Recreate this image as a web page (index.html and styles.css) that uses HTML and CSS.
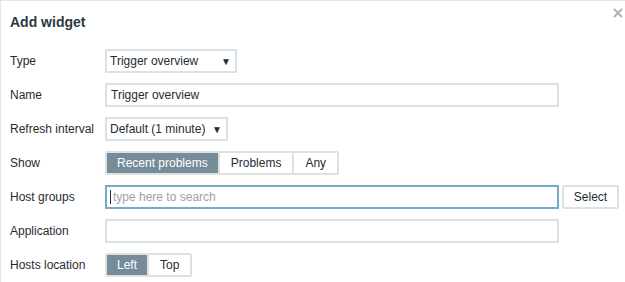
FILE: index.html
```html
<!DOCTYPE html>
<html lang="en">
<head>
  <meta charset="UTF-8" />
  <title>Add widget</title>
  <link rel="stylesheet" href="styles.css">
</head>
<body>
  <div class="dialog">
    <div class="dialog-head">
      <h4>Add widget</h4>
      <button class="btn-close" title="Close">
        <svg width="10" height="10" viewBox="0 0 10 10"><path d="M1 1 L9 9 M9 1 L1 9" stroke="#a9b3b9" stroke-width="2"/></svg>
      </button>
    </div>

    <form class="form-grid">
      <label>Type</label>
      <div class="field">
        <div class="select w-type"><span>Trigger overview</span><i class="arrow">&#9660;</i></div>
      </div>

      <label>Name</label>
      <div class="field">
        <input class="text w-wide" type="text" value="Trigger overview">
      </div>

      <label>Refresh interval</label>
      <div class="field">
        <div class="select w-refresh"><span>Default (1 minute)</span><i class="arrow">&#9660;</i></div>
      </div>

      <label>Show</label>
      <div class="field">
        <div class="radio-list">
          <span class="active">Recent problems</span>
          <span>Problems</span>
          <span>Any</span>
        </div>
      </div>

      <label>Host groups</label>
      <div class="field">
        <div class="multiselect">
          <input class="text w-wide focused" type="text" placeholder="type here to search">
          <span class="caret"></span>
        </div>
        <button type="button" class="btn-alt">Select</button>
      </div>

      <label>Application</label>
      <div class="field">
        <input class="text w-wide" type="text">
      </div>

      <label>Hosts location</label>
      <div class="field">
        <div class="radio-list">
          <span class="active">Left</span>
          <span>Top</span>
        </div>
      </div>
    </form>
  </div>
</body>
</html>
```

FILE: styles.css
```css
/* Base */
* {
  box-sizing: border-box;
}
html, body {
  margin: 0;
  padding: 0;
  height: 100%;
  font-family: 'Liberation Sans', Arial, sans-serif;
  font-size: 12px;
  color: #1f2c33;
  background-color: #fff;
}

/* Dialog */
.dialog {
  height: 100%;
  border-top: 1px solid #e3e7ea;
  border-left: 1px solid #e3e7ea;
  padding: 0 0 0 9px;
}
.dialog-head {
  position: relative;
  padding: 12px 0 18px;
}
.dialog-head h4 {
  margin: 0;
  font-size: 14px;
  font-weight: bold;
  line-height: 18px;
  color: #2b3a42;
}
.btn-close {
  position: absolute;
  top: 7px;
  right: 2px;
  width: 10px;
  height: 10px;
  padding: 0;
  border: none;
  background: none;
  cursor: pointer;
}
.btn-close svg {
  display: block;
}

/* Form */
.form-grid {
  display: grid;
  grid-template-columns: 95px 1fr;
  row-gap: 10px;
  align-items: center;
}
.form-grid label {
  line-height: 24px;
}
.field {
  display: flex;
  align-items: center;
  gap: 3px;
}

.text,
.select {
  height: 24px;
  border: 2px solid #dce1e4;
  background-color: #fff;
  font-family: inherit;
  font-size: 12px;
  color: #1f2c33;
}
.text {
  display: block;
  padding: 0 4px;
  outline: none;
}
.text::placeholder {
  color: #9aa3a8;
}
.text.focused {
  border-color: #78aac8;
}
.w-wide {
  width: 454px;
}

.select {
  display: flex;
  align-items: center;
  justify-content: space-between;
  padding: 0 4px 0 3px;
}
.select .arrow {
  font-style: normal;
  font-size: 10px;
}
.w-type {
  width: 132px;
}
.w-refresh {
  width: 123px;
}

.multiselect {
  position: relative;
}
.multiselect .text {
  padding-left: 6px;
}
.caret {
  position: absolute;
  left: 5px;
  top: 5px;
  width: 1px;
  height: 14px;
  background-color: #1f2c33;
}

/* Segmented radio */
.radio-list {
  display: flex;
  height: 24px;
  border: 2px solid #dce1e4;
  border-radius: 2px;
}
.radio-list span {
  display: flex;
  align-items: center;
  padding: 0 11px;
  border-left: 2px solid #dce1e4;
  background-color: #fff;
}
.radio-list span:first-child {
  border-left: none;
}
.radio-list span.active {
  background-color: #768d99;
  color: #fff;
  padding: 0 10px;
}

.btn-alt {
  height: 24px;
  width: 57px;
  border: 2px solid #dce1e4;
  border-radius: 2px;
  background-color: #fff;
  font-family: inherit;
  font-size: 12px;
  color: #1f2c33;
  padding: 0;
}
```
